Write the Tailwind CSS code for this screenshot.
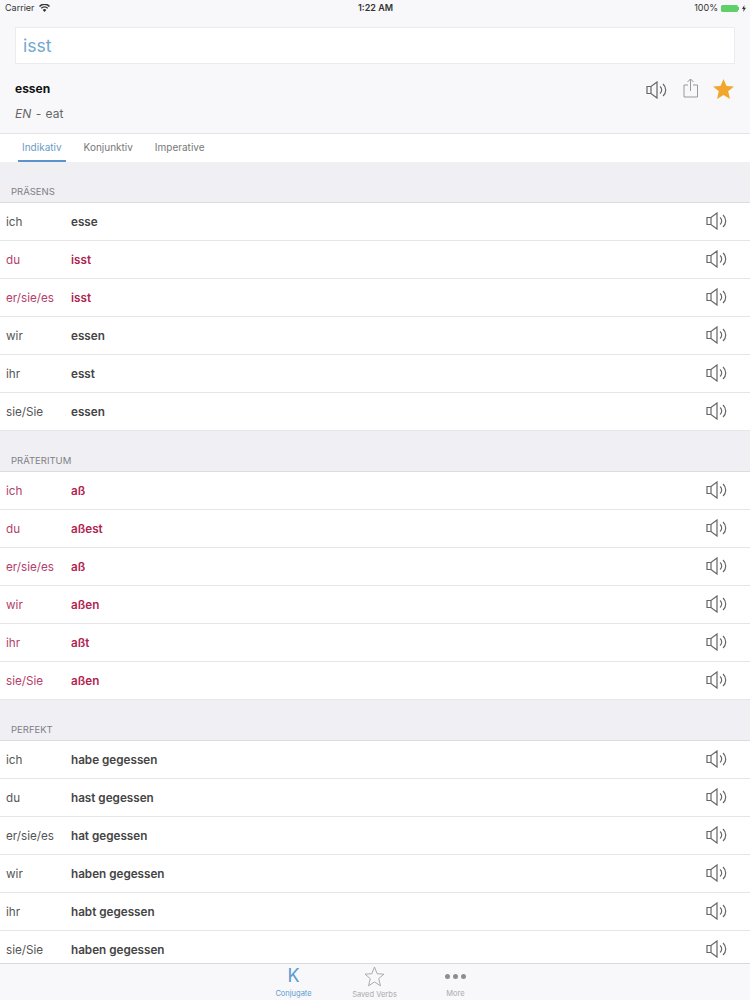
<!DOCTYPE html>
<html lang="de">

<head>
  <meta charset="UTF-8" />
  <title>Conjugate</title>
  <script src="https://cdn.jsdelivr.net/npm/@tailwindcss/browser@4"></script>
</head>

<body class="bg-white font-['Inter','Liberation_Sans',sans-serif] w-[750px] h-[1000px] overflow-hidden flex flex-col">

  <!-- Header -->
  <div class="bg-[#f8f8fa] h-[133px] shrink-0 flex flex-col">
    <div class="h-[16px] pl-[5px] pr-[4px] flex items-center justify-between text-[9px] text-[#333]">
      <div class="flex items-center gap-[4px] w-[120px]">
        <span>Carrier</span>
        <svg width="11" height="8" viewBox="0 0 11 8"><path d="M5.5 8 L3.7 5.9 A2.6 2.6 0 0 1 7.3 5.9 Z M2.7 4.8 L1.8 3.8 A5.2 5.2 0 0 1 9.2 3.8 L8.3 4.8 A4 4 0 0 0 2.7 4.8 Z M1 2.9 L0 1.9 A7.6 7.6 0 0 1 11 1.9 L10 2.9 A6.3 6.3 0 0 0 1 2.9 Z" fill="#333" /></svg>
      </div>
      <span class="font-semibold">1:22 AM</span>
      <div class="flex items-center justify-end w-[120px]">
        <span class="mr-[3px]">100%</span>
        <div class="w-[17px] h-[7px] bg-[#5fd068] rounded-[1.5px]"></div>
        <div class="w-[1px] h-[3px] bg-[#5fd068] mr-[3px]"></div>
        <svg width="4" height="7" viewBox="0 0 4 7"><path d="M2.4 0 L0 4 H1.6 L1.2 7 L4 2.8 H2.2 Z" fill="#333" /></svg>
      </div>
    </div>
    <div class="mx-[15px] mt-[11px] h-[37px] bg-white border border-[#ececf0] px-[7px] pt-[1px] flex items-center text-[17.5px] text-[#6fa8cf]">isst</div>
    <div class="flex justify-between pl-[15px] pr-[16px] mt-[13px]">
      <div>
        <div class="text-[12px] font-bold text-[#111] leading-[24px]">essen</div>
        <div class="text-[12px] text-[#666] leading-[16px] mt-[5px]"><span class="italic">EN</span> <span class="mx-[1px]">-</span> eat</div>
      </div>
      <div class="flex items-start gap-[13px] h-[26px] pt-[1px]">
        <svg width="22" height="18" viewBox="0 0 22 18" fill="none" stroke="#666" stroke-width="1.2" class="mt-[3px] mr-[2px]"><path d="M1 5.5 H5 L11 1 V17 L5 12.5 H1 Z M5 5.5 V12.5" /><path d="M14 5.500 A4.500 4.500 0 0 1 14 12.500 M17 3 A8 8 0 0 1 17 15" /></svg>
        <svg width="15" height="20" viewBox="0 0 15 20" fill="none" stroke="#999" stroke-width="1"><path d="M5 7 H1 V19 H14.500 V7 H10 M7.500 13 V1 M4.500 4 L7.500 1 L10.500 4" /></svg>
        <svg width="21" height="20" viewBox="0 0 21 20" class="ml-[2px] mt-[1px]"><path d="M10.500 0 L13.500 7 L21 7.500 L15.200 12.300 L17 20 L10.500 16 L4 20 L5.800 12.300 L0 7.500 L7.500 7 Z" fill="#f2a62c" /></svg>
      </div>
    </div>
  </div>

  <!-- Tabs -->
  <div class="h-[29px] shrink-0 bg-white border-t border-[#e4e4e8] flex pl-[22px] gap-[22px] text-[10px] text-[#777]">
    <div class="relative leading-[27px] text-[#6a9cc4]">Indikativ
      <div class="absolute -left-[4px] -right-[4px] bottom-0 h-[2px] bg-[#5b93cc]"></div>
    </div>
    <div class="leading-[27px]">Konjunktiv</div>
    <div class="leading-[27px]">Imperative</div>
  </div>

  <div id="list" class="flex-1 overflow-hidden"></div>

  <!-- Tab bar -->
  <div class="h-[37px] shrink-0 bg-[#f8f8fa] border-t border-[#d9d9dd] flex justify-center gap-[41px] pr-[1px] text-[7.5px] text-[#a8a8ac]">
    <div class="w-[40px] flex flex-col items-center text-[#5b9bd0]">
      <span class="text-[18px] leading-[22px] h-[21px] mt-[1px]">K</span>
      <span class="mt-[2px]">Conjugate</span>
    </div>
    <div class="w-[40px] flex flex-col items-center">
      <svg width="21" height="21" viewBox="0 0 21 21" class="mt-[2px]"><path d="M10.500 1 L13.200 7.800 L20 8.300 L14.800 12.800 L16.500 20 L10.500 16.100 L4.500 20 L6.200 12.800 L1 8.300 L7.800 7.800 Z" fill="none" stroke="#a0a0a4" stroke-width="0.9" /></svg>
      <span class="mt-[2px] whitespace-nowrap">Saved Verbs</span>
    </div>
    <div class="w-[40px] flex flex-col items-center">
      <div class="h-[24px] flex items-center gap-[3px]">
        <div class="w-[5px] h-[5px] rounded-full bg-[#8e8e92]"></div>
        <div class="w-[5px] h-[5px] rounded-full bg-[#8e8e92]"></div>
        <div class="w-[5px] h-[5px] rounded-full bg-[#8e8e92]"></div>
      </div>
      <span>More</span>
    </div>
  </div>

  <script>
    const pronouns = ['ich', 'du', 'er/sie/es', 'wir', 'ihr', 'sie/Sie'];
    const sections = [
      { title: 'PRÄSENS', forms: ['esse', 'isst', 'isst', 'essen', 'esst', 'essen'], red: [1, 2] },
      { title: 'PRÄTERITUM', forms: ['aß', 'aßest', 'aß', 'aßen', 'aßt', 'aßen'], red: [0, 1, 2, 3, 4, 5] },
      { title: 'PERFEKT', forms: ['habe gegessen', 'hast gegessen', 'hat gegessen', 'haben gegessen', 'habt gegessen', 'haben gegessen'], red: [] }
    ];
    const speaker = `<svg width="22" height="18" viewBox="0 0 22 18" fill="none" stroke="#666" stroke-width="1.2" class="-mt-[2px]"><path d="M1 5.5 H5 L11 1 V17 L5 12.5 H1 Z M5 5.5 V12.5" /><path d="M14 5.500 A4.500 4.500 0 0 1 14 12.500 M17 3 A8 8 0 0 1 17 15" /></svg>`;

    let html = '';
    sections.forEach(section => {
      html += `<div class="h-[41px] bg-[#efeff4] border-b border-[#dcdce0] px-[11px] flex items-end pb-[3px] text-[9.5px] text-[#808084]">${section.title}</div>`;
      section.forms.forEach((form, i) => {
        const isRed = section.red.includes(i);
        html += `<div class="h-[38px] bg-white border-b border-[#e6e6ea] flex items-center pl-[6px] pr-[22px] text-[11.7px] ${isRed ? 'text-[#b5406a]' : 'text-[#555]'}">
          <span class="w-[65px] pt-[2px]">${pronouns[i]}</span>
          <span class="flex-1 pt-[2px] font-semibold ${isRed ? 'text-[#b01f50]' : 'text-[#444]'}">${form}</span>
          ${speaker}
        </div>`;
      });
    });
    document.getElementById('list').innerHTML = html;
  </script>
</body>

</html>
